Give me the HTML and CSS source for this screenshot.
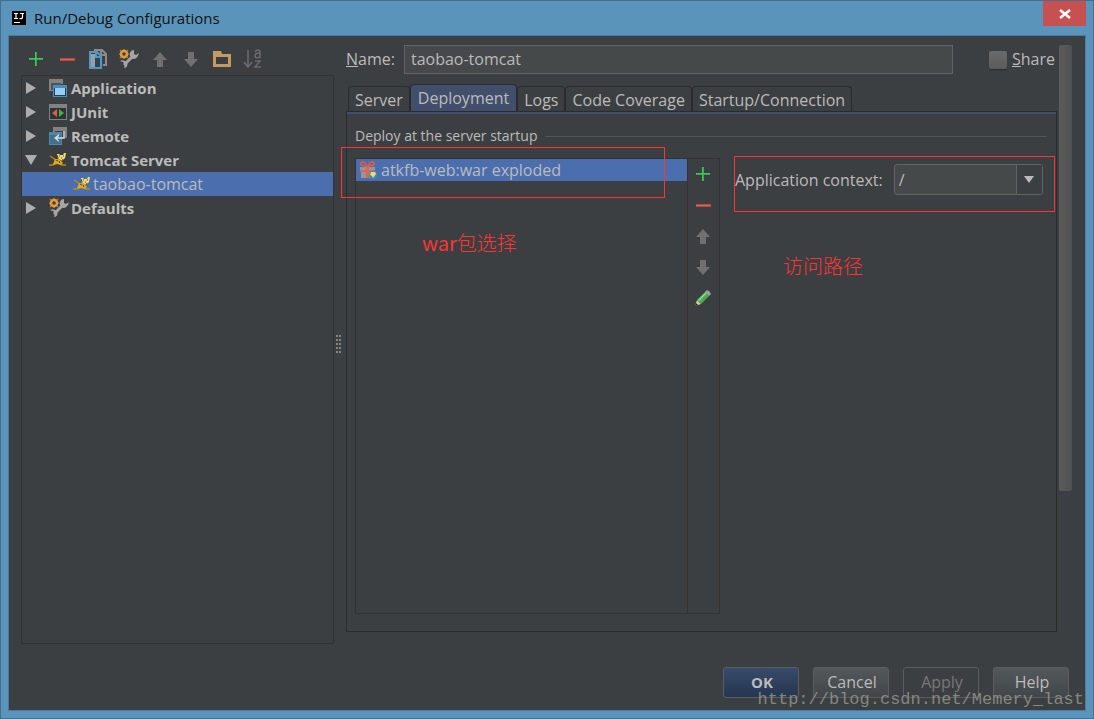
FILE: index.html
```html
<!DOCTYPE html>
<html lang="en">
<head>
<meta charset="utf-8">
<title>Run/Debug Configurations</title>
<link rel="stylesheet" href="styles.css">
</head>
<body>
<svg class="sprites" aria-hidden="true">
  <symbol id="add" viewBox="0 0 18 18"><path d="M8 2h2v6h6v2h-6v6H8v-6H2V8h6z" fill="#2faa4d"/><path d="M2 8.500h14M8.500 2v14" stroke="#48c463" stroke-width="1"/></symbol>
  <symbol id="remove" viewBox="0 0 18 18"><path d="M2 8h15v3H2z" fill="#b9473b"/><path d="M2 9h14v1H2z" fill="#d0665b"/></symbol>
  <symbol id="up" viewBox="0 0 18 18"><path d="M9 2l7 8h-4v7H6v-7H2z" fill="#707070"/></symbol>
  <symbol id="down" viewBox="0 0 18 18"><path d="M9 17l7-8h-4V2H6v7H2z" fill="#707070"/></symbol>
  <symbol id="copy" viewBox="0 0 20 20"><path d="M7 2V1h7l4 4v11h-3" fill="none" stroke="#8b8b8b" stroke-width="2"/><path d="M13 1v5h5" fill="none" stroke="#8b8b8b" stroke-width="2"/><path d="M2 3h7l4 4v12H2z" fill="#33444f" stroke="#5796be" stroke-width="2"/><path d="M3 5h4v13H3z" fill="#8ea2af"/><path d="M8 3v5h5" fill="none" stroke="#5796be" stroke-width="2"/></symbol>
  <symbol id="wrench" viewBox="0 0 20 20"><path d="M5 16L14 7" stroke="#a6a6a6" stroke-width="3"/><path d="M15 1c-3 0-5 3-4 6l3 3c3 0 5-2 6-6l-3 2-2-1z" fill="#a6a6a6"/><path d="M1 12l3 1 2 2-1 4c3 0 4-3 3-6l-2-1c-2-1-4-1-5 0z" fill="#a6a6a6"/><path d="M5 0v10M0 5h10M1 1l8 8M9 1L1 9" stroke="#b8772d" stroke-width="1.500"/><circle cx="5" cy="5" r="3" fill="#3c3f41" stroke="#e39b3c" stroke-width="2.500"/></symbol>
  <symbol id="folder" viewBox="0 0 20 20"><path d="M1 2h8l1 3h9v13H1zM4 8v7h12V8z" fill="#c49a60" fill-rule="evenodd"/></symbol>
  <symbol id="sort" viewBox="0 0 20 20"><path d="M5 1v16M1 13l4 5 4-5" fill="none" stroke="#6b6b6b" stroke-width="1.500"/><path d="M12 3q1-2 3-2t2 3v5M17 4q-5 0-5 2.500t3 2.200q2-.5 2-2.500M12 12h5l-5 6h6" fill="none" stroke="#6b6b6b" stroke-width="1.500"/></symbol>
  <symbol id="app" viewBox="0 0 18 18"><path d="M0 0h14v5h-2V4H2v7h2v1H0z" fill="#828282"/><path d="M2 4h10v2H4v5H2z" fill="#515456"/><path d="M4 6h14v12H4z" fill="#4f8cb3"/><path d="M5 9h12v8H5z" fill="#263d4c"/><path d="M6 9h10v7H6z" fill="#8fd0fa"/></symbol>
  <symbol id="junit" viewBox="0 0 18 16"><path d="M0 0h18v16H0z" fill="#828282"/><path d="M1 4h16v11H1z" fill="#303234"/><path d="M8 5v8L3 9z" fill="#dc5c50"/><path d="M10 5v8l5-4z" fill="#3fae55"/></symbol>
  <symbol id="remote" viewBox="0 0 18 18"><path d="M4 0h14v11h-2V4H6v2H4z" fill="#828282"/><path d="M0 5h13v13H0z" fill="#4d88ae"/><path d="M1 8h11v9H1z" fill="#41708f"/><path d="M15 4v7H8" fill="none" stroke="#dcdcdc" stroke-width="1.500"/><path d="M10 7v2l-2 2 2 3v1l-5-4z" fill="#dcdcdc"/></symbol>
  <symbol id="cat" viewBox="0 0 18 14"><path d="M8 8L4 5 1 3M8 8l-4 4H0M9 9l4 3h4" fill="none" stroke="#b98a16" stroke-width="1.500"/><path d="M6 6l4 0 4 4-2 2-4-1-3 1-1-1z" fill="#dfa91c"/><path d="M8 1l2 0 1 1h3l1-2h2l-1 5-3 3-3-2-2-2z" fill="#f1dd78"/><path d="M10 3h1M14 3h1M12 5h1M7 7l2 1M10 8l1 2M8 2l1 3M14 6l-1 2" stroke="#5c431a" stroke-width="1"/></symbol>
  <symbol id="gift" viewBox="0 0 18 18"><path d="M1 6h15v3H1zM2 10h13v7H2z" fill="#969696"/><path d="M7 5h3v12H7zM1 9h15v2H1z" fill="#d96756"/><path d="M8 5C5-1 1 0 2 4l5 1M9 5c3-6 7-5 6-1l-5 1" fill="none" stroke="#df5b4c" stroke-width="1.500"/><circle cx="14" cy="14" r="4" fill="#3a8bbd"/><path d="M12 11l4 0 1 2-3 4-1-2-2-1z" fill="#eadb79"/></symbol>
  <symbol id="pencil" viewBox="0 0 18 18"><path d="M1 17l2-6 4 4z" fill="#e2c79c"/><path d="M1 17l1-3 2 2z" fill="#222"/><path d="M3 11l8-8 4 4-8 8z" fill="#49ad57"/><path d="M4 11l8-8 1 1-8 8z" fill="#8edb91"/><path d="M11 3l2-2q3 1 4 4l-2 2z" fill="#9da19f"/></symbol>
  <symbol id="right" viewBox="0 0 12 12"><path d="M1 0l10 6-10 6z" fill="#adadad"/></symbol>
  <symbol id="open" viewBox="0 0 12 12"><path d="M0 1h12L6 11z" fill="#adadad"/></symbol>
</svg>
<div class="window">
  <header class="titlebar">
    <svg class="logo" viewBox="0 0 14 14" aria-hidden="true"><path d="M0 0h14v14H0z" fill="#000"/><path d="M2 2.500h4M4 2v6M2 7.500h4M8 2.500h4M10.500 2v4q0 2-3 1.500M2 11.500h6" fill="none" stroke="#fff" stroke-width="1.200"/></svg>
    <h1 class="title">Run/Debug Configurations</h1>
    <button class="close" aria-label="Close"><svg viewBox="0 0 12 10"><path d="M1 1l10 8M11 1L1 9" stroke="#fff" stroke-width="2.500"/></svg></button>
  </header>
  <main class="client">
    <div class="content">
      <aside class="sidebar">
        <div class="toolbar">
          <button class="tool" aria-label="Add"><svg class="i18"><use href="#add"/></svg></button>
          <button class="tool" aria-label="Remove"><svg class="i18"><use href="#remove"/></svg></button>
          <button class="tool" aria-label="Copy"><svg class="i20"><use href="#copy"/></svg></button>
          <button class="tool" aria-label="Edit defaults"><svg class="i20"><use href="#wrench"/></svg></button>
          <button class="tool" aria-label="Move up"><svg class="i18"><use href="#up"/></svg></button>
          <button class="tool" aria-label="Move down"><svg class="i18"><use href="#down"/></svg></button>
          <button class="tool" aria-label="New folder"><svg class="i20"><use href="#folder"/></svg></button>
          <button class="tool" aria-label="Sort"><svg class="i20"><use href="#sort"/></svg></button>
        </div>
        <ul class="tree" role="tree">
          <li class="node" role="treeitem"><svg class="caret"><use href="#right"/></svg><svg class="i18"><use href="#app"/></svg><span>Application</span></li>
          <li class="node" role="treeitem"><svg class="caret"><use href="#right"/></svg><svg class="i18"><use href="#junit"/></svg><span>JUnit</span></li>
          <li class="node" role="treeitem"><svg class="caret"><use href="#right"/></svg><svg class="i18"><use href="#remote"/></svg><span>Remote</span></li>
          <li class="node" role="treeitem" aria-expanded="true"><svg class="caret"><use href="#open"/></svg><svg class="i18 cat"><use href="#cat"/></svg><span>Tomcat Server</span></li>
          <li class="node leaf" role="treeitem" aria-selected="true"><svg class="i18 cat"><use href="#cat"/></svg><span>taobao-tomcat</span></li>
          <li class="node" role="treeitem"><svg class="caret"><use href="#right"/></svg><svg class="i20"><use href="#wrench"/></svg><span>Defaults</span></li>
        </ul>
      </aside>
      <div class="splitter"><i class="grip"></i></div>
      <section class="editor">
        <div class="name-row">
          <label for="name"><u>N</u>ame:</label>
          <input class="name" id="name" type="text" value="taobao-tomcat">
          <div class="share"><input class="check" id="share" type="checkbox"><label for="share"><u>S</u>hare</label></div>
        </div>
        <div class="tabs" role="tablist">
          <button class="tab" role="tab">Server</button>
          <button class="tab active" role="tab" aria-selected="true">Deployment</button>
          <button class="tab" role="tab">Logs</button>
          <button class="tab" role="tab">Code Coverage</button>
          <button class="tab" role="tab">Startup/Connection</button>
        </div>
        <div class="panel" role="tabpanel">
          <h2 class="heading">Deploy at the server startup</h2>
          <div class="deploy">
            <ul class="artifacts">
              <li class="artifact"><svg class="i18"><use href="#gift"/></svg><span>atkfb-web:war exploded</span></li>
            </ul>
            <div class="side-tools">
              <button class="tool" aria-label="Add artifact"><svg class="i18"><use href="#add"/></svg></button>
              <button class="tool" aria-label="Remove artifact"><svg class="i18"><use href="#remove"/></svg></button>
              <button class="tool" aria-label="Move artifact up"><svg class="i18"><use href="#up"/></svg></button>
              <button class="tool" aria-label="Move artifact down"><svg class="i18"><use href="#down"/></svg></button>
              <button class="tool" aria-label="Edit artifact"><svg class="i18"><use href="#pencil"/></svg></button>
            </div>
            <div class="context">
              <label for="context">Application context:</label>
              <div class="combo"><select id="context"><option>/</option></select></div>
            </div>
          </div>
          <div class="mark mark-war"></div>
          <div class="mark mark-context"></div>
          <p class="note note-war"><b>war</b>包选择</p>
          <p class="note note-path">访问路径</p>
        </div>
      </section>
      <div class="scrollbar"><div class="thumb"></div></div>
    </div>
    <footer class="actions">
      <button class="btn primary">OK</button>
      <button class="btn">Cancel</button>
      <button class="btn" disabled>Apply</button>
      <button class="btn">Help</button>
    </footer>
    <div class="watermark">http://blog.csdn.net/Memery_last</div>
  </main>
</div>
</body>
</html>
```
FILE: styles.css
```css
* { box-sizing: border-box; }
body {
  margin: 0;
  font: 16px/20px "Open Sans", "Noto Sans CJK SC", sans-serif;
  color: #bbb;
}
button, input, select { font: inherit; color: inherit; margin: 0; }
button { background: none; border: 0; padding: 0; }
ul, p, h1, h2 { margin: 0; padding: 0; font-weight: 400; list-style: none; }
svg { display: block; flex: none; }
.sprites { position: absolute; width: 0; height: 0; }
.i18 { width: 18px; height: 18px; }
.i20 { width: 20px; height: 20px; }

.window {
  min-height: 100vh;
  display: flex;
  flex-direction: column;
  padding: 0 7px 7px;
  background: #5b94bb;
  border: 1px solid #466f8f;
}
.titlebar { display: flex; align-items: center; height: 34px; padding-left: 4px; }
.logo { width: 14px; height: 14px; }
.title { flex: 1; margin-left: 8px; font-size: 15px; color: #111; }
.close {
  align-self: flex-start;
  display: grid;
  place-items: center;
  width: 43px;
  height: 25px;
  background: #c75050;
}
.close svg { width: 12px; height: 10px; }

.client {
  position: relative;
  flex: 1;
  display: flex;
  flex-direction: column;
  background: #3c3f41;
  border: 1px solid #4a7b9e;
}
.content { flex: 1; display: flex; padding: 9px 13px 0 12px; }
.sidebar { flex: 0 0 313px; display: flex; flex-direction: column; }
.toolbar { display: flex; gap: 7px; height: 30px; padding: 2px 0 0 3px; }
.tool { display: grid; place-items: center; width: 24px; height: 24px; }
.tree { flex: 1; border: 1px solid #323232; }
.node { display: flex; align-items: center; height: 24px; padding-left: 3px; font-size: 15px; font-weight: 700; }
.node span { margin-left: 4px; }
.node .i20 + span { margin-left: 2px; }
.caret { width: 12px; height: 12px; margin-right: 12px; }
.cat { height: 14px; }
.leaf { padding-left: 51px; background: #4b6eaf; font-size: 16px; font-weight: 400; }
.leaf span { margin-left: 2px; }
.splitter { flex: 0 0 12px; display: flex; align-items: center; }
.grip {
  width: 5px;
  height: 20px;
  margin-left: 2px;
  background: radial-gradient(circle at 1px 1px, #858585 1px, transparent 1px) 0 0 / 3px 4px;
}

.editor { flex: 1; display: flex; flex-direction: column; margin-bottom: 12px; }
.name-row { display: flex; align-items: center; height: 29px; }
.name-row label { padding-bottom: 2px; }
.name {
  flex: 1;
  min-width: 0;
  height: 29px;
  margin-left: 9px;
  padding: 0 6px 1px;
  background: #45494a;
  border: 1px solid #646464;
}
.share { display: flex; align-items: center; gap: 5px; margin: 0 2px 0 36px; }
.check {
  appearance: none;
  width: 18px;
  height: 18px;
  background: linear-gradient(#6a6a6a, #5b5b5b);
  border-radius: 2px;
  box-shadow: 0 1px 1px #2a2a2a;
}
.tabs { display: flex; align-items: flex-end; height: 37px; padding-left: 2px; }
.tab {
  height: 25px;
  padding: 2px 6px 0;
  border: 1px solid #2a2b2c;
  border-bottom: 0;
  border-radius: 4px 4px 0 0;
}
.tab.active { height: 27px; padding: 0 7px; background: #424f6c; }
.panel {
  position: relative;
  flex: 1;
  display: flex;
  flex-direction: column;
  padding: 12px 9px 17px 8px;
  border: 1px solid #2a2b2c;
  box-shadow: inset 0 2px #424f6c;
}
.heading { display: flex; align-items: center; gap: 8px; height: 24px; font-size: 14px; }
.heading::after { content: ""; flex: 1; height: 1px; background: #515355; }
.deploy { flex: 1; display: flex; margin-top: 10px; }
.artifacts { flex: 0 0 333px; border: 1px solid #323232; }
.artifact { display: flex; align-items: center; gap: 4px; height: 22px; padding-left: 3px; background: #4b6eaf; }
.side-tools {
  flex: 0 0 32px;
  display: flex;
  flex-direction: column;
  align-items: center;
  gap: 7px;
  padding: 3px 2px 0 0;
  border: 1px solid #323232;
  border-left: 0;
}
.context { flex: 1; display: flex; align-items: center; align-self: flex-start; gap: 11px; padding: 6px 4px 0 15px; white-space: nowrap; }
.combo { position: relative; flex: 1; }
.combo select {
  appearance: none;
  display: block;
  width: 100%;
  height: 31px;
  padding: 0 4px;
  background: #45494a;
  border: 1px solid #646464;
  border-radius: 3px;
}
.combo::before {
  content: "";
  position: absolute;
  inset: 1px 1px 1px auto;
  width: 25px;
  background: #3c3f41;
  border-left: 1px solid #646464;
  pointer-events: none;
}
.combo::after {
  content: "";
  position: absolute;
  top: 12px;
  right: 9px;
  border: 5px solid transparent;
  border-top: 7px solid #bbb;
  border-bottom: 0;
  pointer-events: none;
}
.mark { position: absolute; border: 1px solid #fb3434; pointer-events: none; }
.mark-war { left: -6px; top: 35px; width: 324px; height: 51px; }
.mark-context { right: 1px; top: 44px; width: 321px; height: 56px; }
.note { position: absolute; color: #fb3434; font: 300 20px/24px "Noto Sans CJK SC", sans-serif; }
.note b { font-weight: 400; }
.note-war { left: 75px; top: 119px; }
.note-path { left: 436px; top: 142px; }

.scrollbar { flex: 0 0 13px; margin: 0 0 12px 2px; }
.thumb { height: 76%; background: linear-gradient(90deg, #5b5b5b, #505152); border-radius: 2px; }
.actions { display: flex; justify-content: flex-end; gap: 14px; padding: 23px 16px 12px; }
.btn {
  width: 76px;
  height: 31px;
  padding: 0 0 1px 2px;
  background: linear-gradient(#53585a, #414648);
  border: 1px solid #5b5e60;
  border-radius: 3px;
}
.btn.primary { background: linear-gradient(#374b6a, #253650); font-size: 15px; font-weight: 700; }
.btn:disabled { background: none; color: #777; }
.watermark {
  position: absolute;
  right: 1px;
  bottom: 0;
  font: 17px/20px "Liberation Mono", monospace;
  color: #969890;
  opacity: .8;
  pointer-events: none;
}
```
